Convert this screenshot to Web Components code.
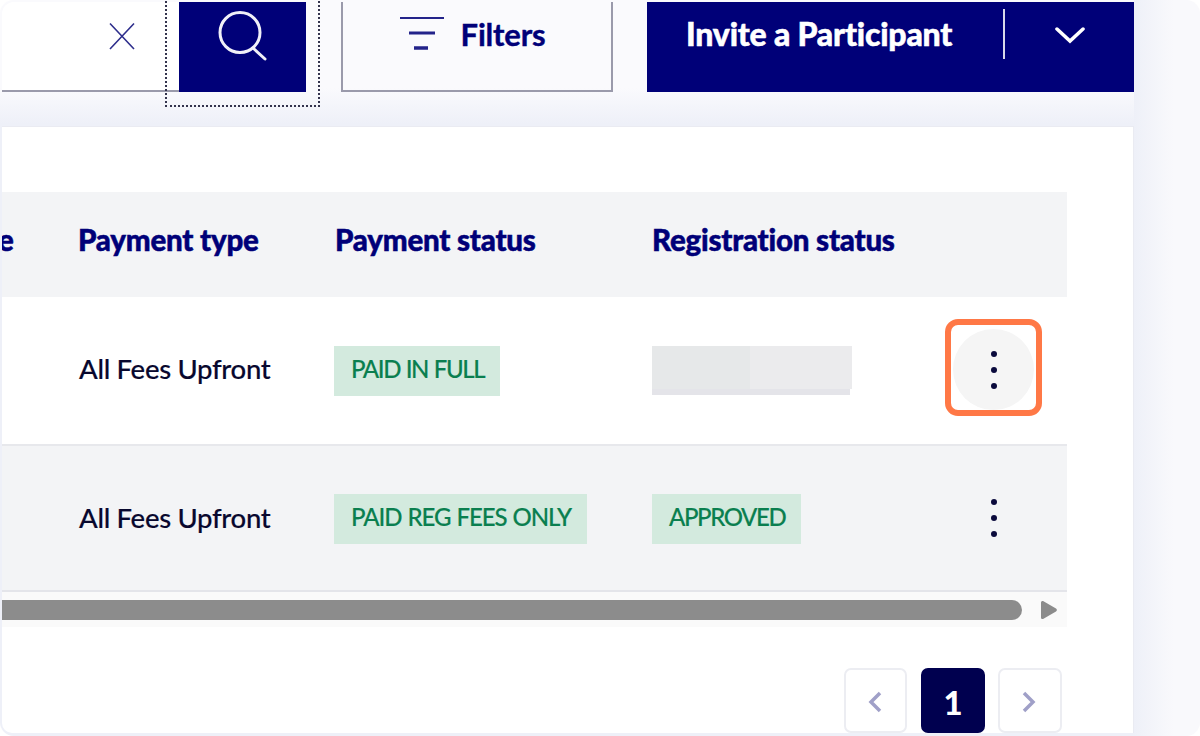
<!DOCTYPE html>
<html>
<head>
<meta charset="utf-8">
<style>
  html, body { margin: 0; height: 100%; }
  body { background: #fff; overflow: hidden; font-family: Lato, "Open Sans", sans-serif; }
</style>
</head>
<body>
<participants-page>
  <search-bar slot="toolbar"></search-bar>
  <filter-button slot="toolbar"></filter-button>
  <invite-button slot="toolbar"></invite-button>
  <participant-table slot="card"></participant-table>
  <page-nav slot="card"></page-nav>
</participants-page>

<script>
class ParticipantsPage extends HTMLElement {
  constructor() {
    super();
    this.attachShadow({ mode: 'open' });
    this.shadowRoot.innerHTML = `
      <style>
        :host {
          display: block; box-sizing: border-box; height: 736px; padding: 2px 0 0 2px;
          overflow: hidden; border-radius: 14px;
          background:
            linear-gradient(90deg, #eef0f8, #f9f9fc 60%) 1134px 0 / 66px 100% no-repeat,
            linear-gradient(180deg, #fafafd 0, #fafafd 88px, #eef0f8 124px, #eef0f8 100%);
        }
        .toolbar { display: flex; height: 90px; }
        .card {
          box-sizing: border-box; width: 1132px; height: 607px; margin-top: 34px;
          padding-top: 65px; background: #fff;
          border: 1px solid #eaebf2; border-left: 0; border-bottom: 0;
          border-bottom-left-radius: 10px;
        }
      </style>
      <div class="toolbar"><slot name="toolbar"></slot></div>
      <div class="card"><slot name="card"></slot></div>`;
  }
}

class SearchBar extends HTMLElement {
  constructor() {
    super();
    this.attachShadow({ mode: 'open' });
    this.shadowRoot.innerHTML = `
      <style>
        :host { display: flex; position: relative; width: 304px; height: 90px; z-index: 1; }
        .input {
          box-sizing: border-box; width: 177px; height: 90px; display: flex; align-items: flex-start;
          justify-content: flex-end; padding: 19px 43px 0 0; background: #fff;
          border-bottom: 2px solid #9a9aab; border-top-left-radius: 12px;
        }
        .btn {
          width: 127px; height: 90px; background: #000078; display: flex;
          justify-content: center; align-items: flex-start; padding-top: 9px; box-sizing: border-box;
        }
        .focus {
          position: absolute; left: 163px; top: -4px; width: 151px; height: 105px;
          border: 2px dotted #33334d; pointer-events: none;
        }
      </style>
      <div class="input">
        <svg width="28" height="30" viewBox="0 0 28 30" fill="none" stroke="#2e2e8c" stroke-width="1.6"><path d="M2 2.5 26 28M26 2.5 2 28"/></svg>
      </div>
      <div class="btn">
        <svg width="52" height="52" viewBox="0 0 52 52" fill="none" stroke="#f0f0f8" stroke-width="3"><circle cx="23" cy="21.5" r="20"/><path d="M36 37 48 48" stroke-linecap="round"/></svg>
      </div>
      <div class="focus"></div>`;
  }
}

class FilterButton extends HTMLElement {
  constructor() {
    super();
    this.attachShadow({ mode: 'open' });
    this.shadowRoot.innerHTML = `
      <style>
        :host {
          box-sizing: border-box; display: flex; justify-content: center; width: 272px; height: 90px;
          margin-left: 35px; border: 2px solid #9a9aab; border-top: 0; padding: 13px 10px 0 0; gap: 16px;
          color: #000078; font: 700 31px/38px Lato, sans-serif; letter-spacing: -.2px;
          -webkit-text-stroke: .4px #000078;
        }
        svg { margin-top: 1px; }
      </style>
      <svg width="46" height="36" viewBox="0 0 46 36" fill="none" stroke="#23238a"><path d="M1 2H45" stroke-width="2"/><path d="M10 17H36" stroke-width="3"/><path d="M15 32H29" stroke-width="3.5"/></svg>
      <span>Filters</span>`;
  }
}

class InviteButton extends HTMLElement {
  constructor() {
    super();
    this.attachShadow({ mode: 'open' });
    this.shadowRoot.innerHTML = `
      <style>
        :host {
          box-sizing: border-box; display: flex; width: 487px; height: 90px; margin-left: 34px;
          background: #000078; color: #fff; font: 900 32px/38px Lato, sans-serif; letter-spacing: -.2px;
          -webkit-text-stroke: .5px #fff;
        }
        .label { margin: 13px 0 0 39px; width: 317px; white-space: nowrap; }
        .sep { width: 2px; height: 50px; margin-top: 7px; background: #d8d8e8; }
        svg { margin: 23px 0 0 50px; }
      </style>
      <span class="label">Invite a Participant</span>
      <span class="sep"></span>
      <svg width="30" height="20" viewBox="0 0 30 20" fill="none" stroke="#fff" stroke-width="3.5" stroke-linecap="round"><path d="M2 4 15 16 28 4"/></svg>`;
  }
}

class StatusBadge extends HTMLElement {
  constructor() {
    super();
    this.attachShadow({ mode: 'open' });
    this.shadowRoot.innerHTML = `
      <style>
        :host {
          display: inline-flex; align-items: center; height: 50px; padding: 0 16px 4px 17px; box-sizing: border-box;
          background: #d3eade; color: #0a7f4f; font: 500 24px/1 Lato, sans-serif;
          letter-spacing: var(--track, -1.3px); word-spacing: 1.2px; white-space: nowrap;
          -webkit-text-stroke: .15px #0a7f4f;
        }
      </style>
      <slot></slot>`;
  }
}

class KebabButton extends HTMLElement {
  constructor() {
    super();
    this.attachShadow({ mode: 'open' });
    this.shadowRoot.innerHTML = `
      <style>
        :host { display: flex; align-items: center; justify-content: center; width: 81px; height: 81px; border-radius: 50%; }
        :host([active]) { background: #f5f5f5; }
        svg { display: block; }
      </style>
      <svg width="8" height="40" viewBox="0 0 8 40" fill="#0a0a3c"><circle cx="4" cy="4" r="3"/><circle cx="4" cy="20" r="3"/><circle cx="4" cy="36" r="3"/></svg>`;
  }
}

class ParticipantTable extends HTMLElement {
  constructor() {
    super();
    this.attachShadow({ mode: 'open' });
    this.shadowRoot.innerHTML = `
      <style>
        :host { display: block; width: 1065px; overflow: hidden; color: #000; font-family: Lato, sans-serif; }
        .row { display: grid; grid-template-columns: 77px 255px 318px 293px 97px 1fr; align-items: center; }
        .head {
          height: 105px; background: #f3f4f6; color: #000078;
          font: 900 29.5px/30px Lato, sans-serif; letter-spacing: -.22px; padding-bottom: 10px; box-sizing: border-box;
          -webkit-text-stroke: .5px #000078;
        }
        .head .p1 { margin-left: -1px; }
        .head .p2 { padding-left: 1px; }
        .e { margin-left: -4px; }
        .body { font: 500 27.5px/30px Lato, sans-serif; color: #08082e; letter-spacing: -.3px; -webkit-text-stroke: .15px #08082e; }
        .r1 { height: 149px; background: #fff; border-bottom: 2px solid #e7e8ec; box-sizing: border-box; }
        .r2 { height: 146px; background: #f3f4f6; border-bottom: 2px solid #e4e5ea; box-sizing: border-box; }
        .r1 .name { padding-bottom: 4px; }
        .r2 status-badge { margin-top: 2px; }
        .cell { display: flex; align-items: center; }
        .mark {
          box-sizing: border-box; width: 97px; height: 97px; display: flex; align-items: center; justify-content: center;
          border: 6px solid #ff7846; border-radius: 13px; padding-top: 4px; margin-bottom: 6px;
        }
        .plain { display: flex; justify-content: center; }
        .blur { width: 198px; height: 49px; background: #e4e4e9; }
        .blur div { display: flex; width: 200px; height: 43px; }
        .blur i { flex: 0 0 98px; background: #e6e8e9; }
        .blur i + i { flex: 1; background: #ebebed; }
        .scroll {
          display: flex; align-items: center; height: 35px; background: #fafafa; box-sizing: border-box; padding-top: 1px;
        }
        .thumb { width: 1020px; height: 20px; background: #8c8c8c; border-radius: 0 10px 10px 0; }
        .arrow { margin-left: 18px; }
      </style>
      <div class="row head">
        <div class="e">e</div>
        <div class="p1">Payment type</div>
        <div class="p2">Payment status</div>
        <div>Registration status</div>
      </div>
      <div class="row body r1">
        <div></div>
        <div class="name">All Fees Upfront</div>
        <div class="cell"><status-badge style="--track:-1.45px">PAID IN FULL</status-badge></div>
        <div class="cell"><div class="blur"><div><i></i><i></i></div></div></div>
        <div class="mark"><kebab-button active></kebab-button></div>
      </div>
      <div class="row body r2">
        <div></div>
        <div class="name">All Fees Upfront</div>
        <div class="cell"><status-badge style="--track:-1.1px">PAID REG FEES ONLY</status-badge></div>
        <div class="cell"><status-badge style="--track:-1.4px">APPROVED</status-badge></div>
        <div class="plain"><kebab-button></kebab-button></div>
      </div>
      <div class="scroll">
        <div class="thumb"></div>
        <svg class="arrow" width="18" height="20" viewBox="0 0 18 20" fill="#8c8c8c"><path d="M1 2.5C1 1 2.5.5 3.5 1.2L16 8.5c1.2.8 1.2 2.2 0 3L3.5 18.8C2.5 19.5 1 19 1 17.5Z"/></svg>
      </div>`;
  }
}

class PageNav extends HTMLElement {
  constructor() {
    super();
    this.attachShadow({ mode: 'open' });
    this.shadowRoot.innerHTML = `
      <style>
        :host { display: flex; justify-content: flex-end; padding: 41px 71px 0 0; }
        .b {
          box-sizing: border-box; width: 64px; height: 65px; border: 2px solid #ecedf2; border-radius: 7px;
          display: flex; align-items: center; justify-content: center; background: #fff;
        }
        .b svg { margin-top: 3px; }
        .prev { width: 63px; margin-right: 14px; padding-right: 2px; }
        .next { padding-right: 2px; }
        .on {
          background: #00004f; border-color: #00004f; color: #fff; margin-right: 13px; padding-top: 3px;
          font: 900 33px/1 Lato, sans-serif;
        }
      </style>
      <div class="b prev"><svg width="14" height="22" viewBox="0 0 14 22" fill="none" stroke="#a0a0c8" stroke-width="3.5"><path d="M12 2 3 11 12 20"/></svg></div>
      <div class="b on">1</div>
      <div class="b next"><svg width="14" height="22" viewBox="0 0 14 22" fill="none" stroke="#a0a0c8" stroke-width="3.5"><path d="M2 2 11 11 2 20"/></svg></div>`;
  }
}

customElements.define('participants-page', ParticipantsPage);
customElements.define('search-bar', SearchBar);
customElements.define('filter-button', FilterButton);
customElements.define('invite-button', InviteButton);
customElements.define('status-badge', StatusBadge);
customElements.define('kebab-button', KebabButton);
customElements.define('participant-table', ParticipantTable);
customElements.define('page-nav', PageNav);
</script>
</body>
</html>
